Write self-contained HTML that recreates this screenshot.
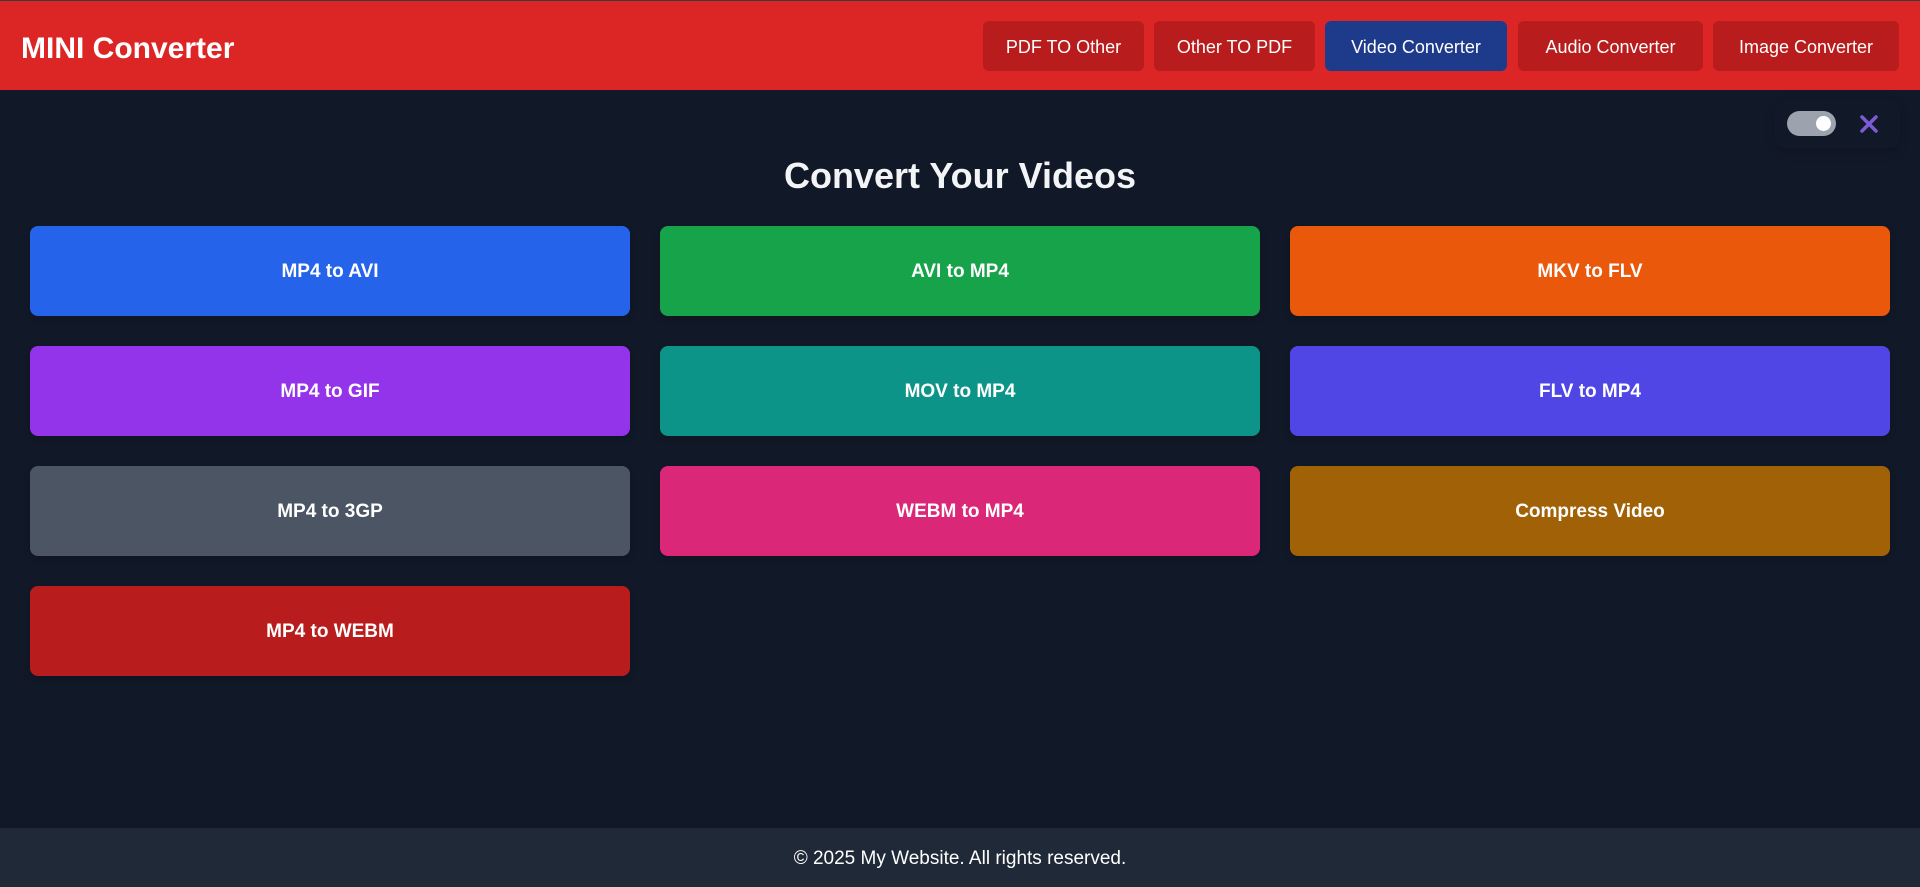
<!DOCTYPE html>
<html><head><meta charset="utf-8"><style>
*{box-sizing:border-box;margin:0;padding:0}
body{width:1920px;height:887px;background:#111827;font-family:"Liberation Sans",sans-serif;color:#fff;position:relative;overflow:hidden}
.top{position:absolute;top:0;left:0;width:1920px;height:1px;background:#3a3a3a}
header{position:absolute;top:1px;left:0;width:1920px;height:89px;background:#dc2626}
.logo{position:absolute;left:21px;top:31px;font-size:30px;font-weight:bold}
.nav a{position:absolute;top:20px;height:50px;background:#b91c1c;border-radius:6px;font-size:18px;display:flex;align-items:center;justify-content:center;color:#fff;text-decoration:none;padding-top:2px}
.nav a.act{background:#1e3a8a}
.toggle{position:absolute;left:1787px;top:111px;width:49px;height:25px;border-radius:13px;background:#9ca3af}
.toggle:after{content:"";position:absolute;right:5px;top:5px;width:15px;height:15px;border-radius:50%;background:#fff}
.panel{position:absolute;left:1775px;top:100px;width:125px;height:48px;border-radius:10px;box-shadow:0 4px 10px rgba(0,0,0,.15)}
h1{position:absolute;top:155px;left:0;width:1920px;text-align:center;font-size:36px;font-weight:bold;color:#f3f4f6}
.c{position:absolute;width:600px;height:90px;border-radius:8px;display:flex;align-items:center;justify-content:center;font-size:19px;font-weight:bold;padding-top:2px;box-shadow:0 4px 8px rgba(0,0,0,.12)}
footer{position:absolute;top:828px;left:0;width:1920px;height:59px;background:#1f2937;display:flex;align-items:center;justify-content:center;font-size:19px;padding-top:2px}
</style></head><body>
<div class="top"></div>
<header><div class="logo">MINI Converter</div>
<div class="nav">
<a style="left:983px;width:161px">PDF TO Other</a>
<a style="left:1154px;width:161px">Other TO PDF</a>
<a class="act" style="left:1325px;width:182px">Video Converter</a>
<a style="left:1518px;width:185px">Audio Converter</a>
<a style="left:1713px;width:186px">Image Converter</a>
</div></header>
<div class="panel"></div>
<div class="toggle"></div>
<svg style="position:absolute;left:1859px;top:115px" width="20" height="18" viewBox="0 0 20 18"><path d="M3 2L17 16M17 2L3 16" stroke="#7c5cd6" stroke-width="3.5" stroke-linecap="round"/></svg>
<h1>Convert Your Videos</h1>
<div class="c" style="left:30px;top:226px;background:#2563eb">MP4 to AVI</div>
<div class="c" style="left:660px;top:226px;background:#16a34a">AVI to MP4</div>
<div class="c" style="left:1290px;top:226px;background:#ea580c">MKV to FLV</div>
<div class="c" style="left:30px;top:346px;background:#9333ea">MP4 to GIF</div>
<div class="c" style="left:660px;top:346px;background:#0d9488">MOV to MP4</div>
<div class="c" style="left:1290px;top:346px;background:#4f46e5">FLV to MP4</div>
<div class="c" style="left:30px;top:466px;background:#4b5563">MP4 to 3GP</div>
<div class="c" style="left:660px;top:466px;background:#db2777">WEBM to MP4</div>
<div class="c" style="left:1290px;top:466px;background:#a16207">Compress Video</div>
<div class="c" style="left:30px;top:586px;background:#b91c1c">MP4 to WEBM</div>
<footer>© 2025 My Website. All rights reserved.</footer>
</body></html>
